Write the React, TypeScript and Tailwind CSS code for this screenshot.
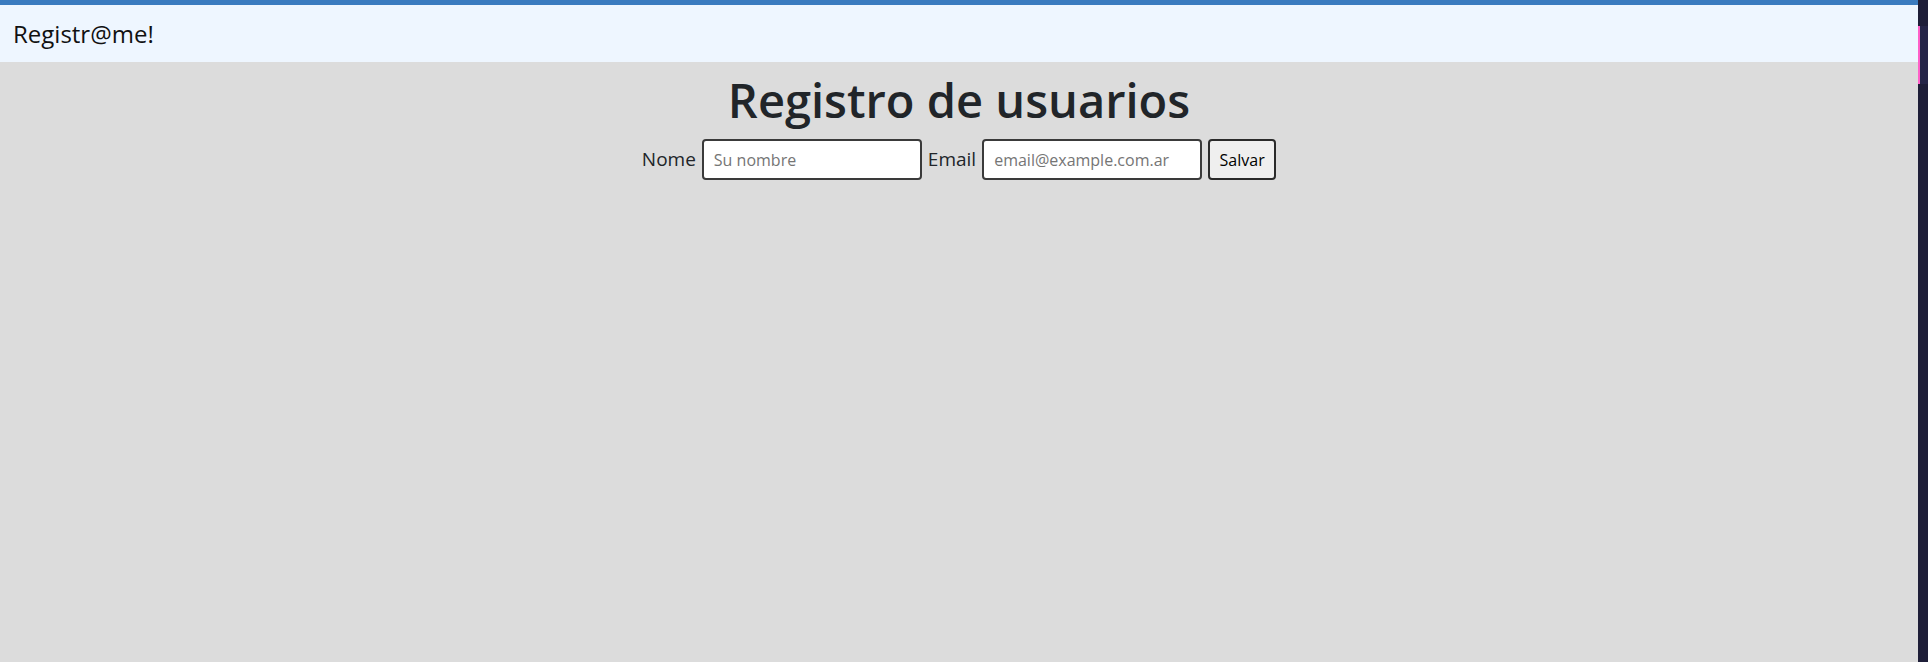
export default function App() {
  return (
    <div className="flex min-h-screen w-full bg-[#1e1e38]" style={{ fontFamily: '"Open Sans", "Noto Sans", sans-serif' }}>
      <div className="flex w-[1918px] flex-col bg-[#dcdcdc]">
        <nav className="flex h-[62px] items-center border-t-[5px] border-[#3a7bbf] bg-[#eef6ff] px-[13px]">
          <span className="text-[24px] leading-none text-[#111]">Registr@me!</span>
        </nav>
        <h1 className="mt-[8px] text-center text-[47px] leading-[60px] font-semibold text-[#212529]">Registro de usuarios</h1>
        <form className="mt-[9px] flex items-center justify-center gap-[6px]" onSubmit={(e) => e.preventDefault()}>
          <label className="text-[19px] text-[#212529]">Nome</label>
          <input
            className="h-[41px] w-[220px] rounded-[4px] border-2 border-[#3a3a3a] bg-white px-[10px] text-[16px] text-black outline-none placeholder:text-[#757575]"
            placeholder="Su nombre"
          />
          <label className="text-[19px] text-[#212529]">Email</label>
          <input
            className="h-[41px] w-[220px] rounded-[4px] border-2 border-[#3a3a3a] bg-white px-[10px] text-[16px] text-black outline-none placeholder:text-[#757575]"
            placeholder="email@example.com.ar"
          />
          <button type="submit" className="h-[41px] w-[68px] rounded-[4px] border-2 border-[#2a2a2a] bg-[#efefef] text-[16px] text-black">
            Salvar
          </button>
        </form>
      </div>
      <div className="flex w-[10px] flex-col">
        <div className="h-[26px]" />
        <div className="flex h-[58px]">
          <div className="w-[2px] bg-[#ff5fc8]" />
          <div className="flex-1 bg-[#252547]" />
        </div>
      </div>
    </div>
  );
}
